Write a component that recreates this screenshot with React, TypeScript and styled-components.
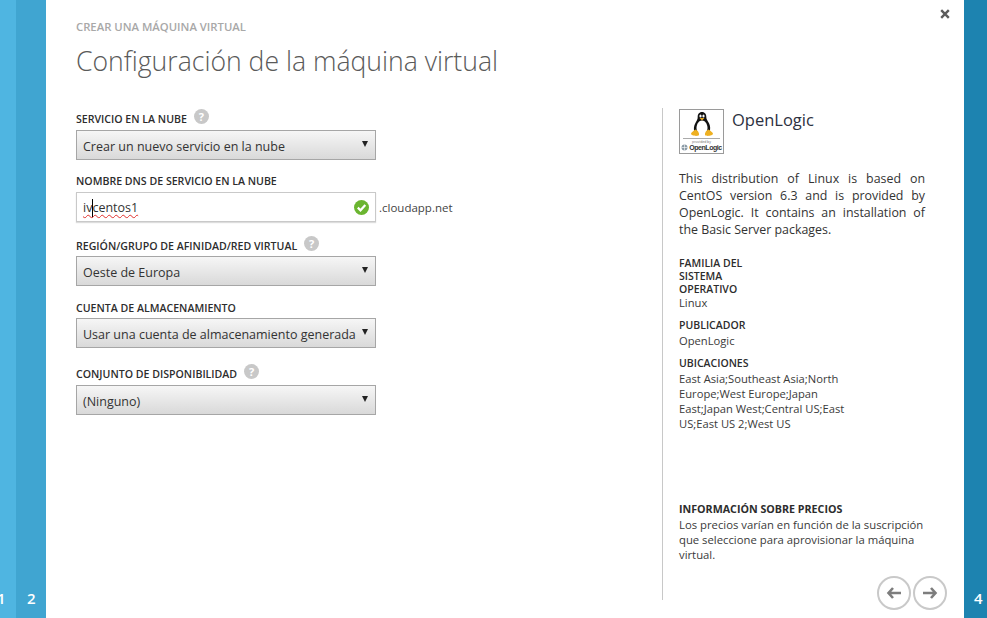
import React from "react";
import styled, { createGlobalStyle } from "styled-components";

const Global = createGlobalStyle`
  html, body { margin: 0; padding: 0; background: #fff; }
  body { font-family: "Open Sans", "Noto Sans", "Liberation Sans", sans-serif; color: #2f2f2f; }
  * { box-sizing: border-box; }
`;

const Page = styled.div`
  width: 987px;
  height: 618px;
  display: flex;
  overflow: hidden;
`;

const Rail = styled.div<{ $w: number; $bg: string; $pad: number }>`
  width: ${(p) => p.$w}px;
  flex: none;
  background: ${(p) => p.$bg};
  color: #fff;
  font-size: 15px;
  font-weight: 600;
  line-height: 20px;
  display: flex;
  align-items: flex-end;
  padding: 0 0 10px ${(p) => p.$pad}px;
  overflow: hidden;
`;

const ClippedDigit = styled.span`
  margin-left: -3px;
`;

const Main = styled.main`
  flex: 1;
  position: relative;
  display: flex;
  padding: 0 0 0 30px;
`;

const Close = styled.div`
  position: absolute;
  top: 9px;
  right: 14px;
  width: 10px;
  height: 10px;
  line-height: 0;
`;

const FormCol = styled.div`
  width: 586px;
  flex: none;
`;

const Crumb = styled.div`
  margin-top: 19px;
  height: 16px;
  line-height: 16px;
  font-size: 11.3px;
  font-weight: 600;
  color: #a8a8a8;
`;

const Title = styled.h1`
  margin: 7px 0 0;
  height: 38px;
  line-height: 38px;
  font-size: 26.6px;
  font-weight: 300;
  color: #5a5a5a;
  white-space: nowrap;
`;

const Form = styled.div`
  margin-top: 32px;
  width: 420px;
`;

const Label = styled.div<{ $top: number }>`
  margin-top: ${(p) => p.$top}px;
  height: 14px;
  line-height: 14px;
  font-size: 10.6px;
  font-weight: 600;
  color: #2d2d2d;
  display: flex;
  align-items: center;
  white-space: nowrap;
`;

const Help = styled.span`
  width: 15px;
  height: 15px;
  margin: -6px 0 0 7px;
  border-radius: 50%;
  background: #c8c8c8;
  color: #fff;
  font-size: 11px;
  font-weight: 700;
  line-height: 15px;
  text-align: center;
`;

const Select = styled.div<{ $gap?: number }>`
  width: 300px;
  height: 30px;
  margin-top: ${(p) => p.$gap ?? 4}px;
  border: 1px solid #a6a6a6;
  background: linear-gradient(#f6f6f6, #d9d9d9);
  display: flex;
  align-items: center;
  justify-content: space-between;
  padding: 3px 7px 0 6px;
  font-size: 12.5px;
  color: #333;
  white-space: nowrap;
`;

const Caret = styled.span`
  width: 0;
  height: 0;
  margin-top: -5px;
  border-left: 3px solid transparent;
  border-right: 3px solid transparent;
  border-top: 6px solid #222;
`;

const InputRow = styled.div`
  display: flex;
  align-items: center;
  margin-top: 4px;
`;

const Input = styled.div`
  width: 300px;
  height: 30px;
  border: 1px solid #c9c9c9;
  box-shadow: 0 1px 1px #ddd;
  display: flex;
  align-items: center;
  justify-content: space-between;
  padding: 0 6px;
  font-size: 12.5px;
  color: #333;
`;

const Typed = styled.span`
  position: relative;
  text-decoration: underline wavy #e0302c 1px;
  text-underline-offset: 2px;
`;

const TextCursor = styled.span`
  position: absolute;
  left: 9px;
  top: 0;
  width: 1px;
  height: 18px;
  background: #000;
`;

const Suffix = styled.span`
  margin-left: 3px;
  font-size: 11.5px;
  color: #444;
`;

const Side = styled.aside`
  width: 302px;
  height: 492px;
  margin-top: 108px;
  border-left: 1px solid #c8c8c8;
  padding: 1px 39px 0 16px;
  display: flex;
  flex-direction: column;
`;

const Head = styled.div`
  display: flex;
  gap: 8px;
`;

const Logo = styled.div`
  width: 45px;
  height: 45px;
  padding-top: 2px;
  border: 1px solid #9a9a9a;
  display: flex;
  flex-direction: column;
  align-items: center;
  flex: none;
`;

const LogoRule = styled.div`
  width: 37px;
  border-top: 1px solid #aaa;
  margin-top: 1px;
`;

const LogoSmall = styled.div`
  font-size: 3.4px;
  line-height: 5px;
  color: #666;
`;

const LogoBrand = styled.div`
  display: flex;
  align-items: center;
  gap: 1px;
  font-family: "Liberation Sans", sans-serif;
  font-size: 7px;
  line-height: 7px;
  font-weight: 700;
  color: #333;
  white-space: nowrap;
  letter-spacing: -0.45px;
`;

const Vendor = styled.div`
  font-size: 16.5px;
  line-height: 22px;
  color: #2c3140;
`;

const Desc = styled.p`
  margin: 16px 0 0;
  width: 246px;
  font-size: 12.4px;
  line-height: 17px;
  text-align: justify;
  color: #333;
`;

const Term = styled.div<{ $top: number }>`
  margin-top: ${(p) => p.$top}px;
  width: 90px;
  font-size: 10.5px;
  line-height: 13px;
  font-weight: 600;
  color: #2d2d2d;
`;

const Value = styled.div<{ $top?: number }>`
  margin-top: ${(p) => p.$top ?? 0}px;
  width: 175px;
  font-size: 11.2px;
  line-height: 15px;
  color: #3a3a3a;
`;

const Pricing = styled.div`
  margin-top: auto;
  width: 250px;
`;

const PriceTitle = styled.div`
  font-size: 10.7px;
  line-height: 15px;
  font-weight: 700;
  color: #2d2d2d;
  white-space: nowrap;
`;

const PriceText = styled.div`
  font-size: 11.3px;
  line-height: 15px;
  color: #3a3a3a;
`;

const Nav = styled.div`
  display: flex;
  justify-content: flex-end;
  gap: 2px;
  margin: 14px -22px -10px 0;
`;

const NavBtn = styled.div`
  width: 34px;
  height: 34px;
  border: 2px solid #c9c9c9;
  border-radius: 50%;
  display: flex;
  align-items: center;
  justify-content: center;
  background: #fff;
`;

const ArrowIcon = styled.svg<{ $flip?: boolean }>`
  transform: ${(p) => (p.$flip ? "scaleX(-1)" : "none")};
`;

const Arrow = ({ flip }: { flip?: boolean }) => (
  <ArrowIcon $flip={flip} width="16" height="14" viewBox="0 0 16 14">
    <path d="M7 2 2.5 7 7 12M3 7h12" fill="none" stroke="#7d7d7d" strokeWidth="2.6" />
  </ArrowIcon>
);

const Penguin = () => (
  <svg width="22" height="25" viewBox="0 0 22 25">
    <path d="M11 0c3 0 4.3 2.4 4.3 5 0 2.5 1.3 3.6 2.7 6.2 1.3 2.5 1.6 5.8.6 8.3H3.4c-1-2.5-.5-5.7.9-8.3C5.700 8.600 6.700 7.500 6.700 5 6.700 2.400 8 0 11 0z" fill="#111" />
    <path d="M11 8.500c3 0 5.500 3.500 5.500 7.500 0 3.500-2 5.500-5.500 5.500S5.500 19.500 5.500 16c0-4 2.500-7.500 5.500-7.500z" fill="#fff" />
    <ellipse cx="9.500" cy="4" rx="1.100" ry="1.500" fill="#fff" />
    <ellipse cx="12.500" cy="4" rx="1.100" ry="1.500" fill="#fff" />
    <path d="M8.500 6h5l-2.500 2.500z" fill="#e9a91f" />
    <path d="M4.500 17.500C2.500 18.800 0 20.500 0 21.800c0 1.800 6.500 3 8 1.200.5-2-1.200-4.600-3.500-5.500zM17.500 17.500c2 1.300 4.500 3 4.500 4.300 0 1.800-6.500 3-8 1.200-.5-2 1.200-4.600 3.500-5.500z" fill="#eeb021" />
  </svg>
);

const Globe = () => (
  <svg width="7" height="7" viewBox="0 0 7 7">
    <circle cx="3.500" cy="3.500" r="3" fill="#8a9aa5" />
    <path d="M.5 3.500h6M3.500.5v6" stroke="#fff" strokeWidth=".6" />
  </svg>
);

export default function App() {
  return (
    <Page>
      <Global />
      <Rail $w={16} $bg="#4fb5e1" $pad={0}><ClippedDigit>1</ClippedDigit></Rail>
      <Rail $w={30} $bg="#40a5d1" $pad={11}>2</Rail>
      <Main>
        <Close>
          <svg width="10" height="10" viewBox="0 0 10 10">
            <path d="M1.2 1.2l7.600 7.600M8.800 1.200 1.200 8.800" stroke="#5c5c5c" strokeWidth="2.4" />
          </svg>
        </Close>
        <FormCol>
          <Crumb>CREAR UNA MÁQUINA VIRTUAL</Crumb>
          <Title>Configuración de la máquina virtual</Title>
          <Form>
            <Label $top={0}>SERVICIO EN LA NUBE<Help>?</Help></Label>
            <Select>Crear un nuevo servicio en la nube<Caret /></Select>
            <Label $top={14}>NOMBRE DNS DE SERVICIO EN LA NUBE</Label>
            <InputRow>
              <Input>
                <Typed>ivcentos1<TextCursor /></Typed>
                <svg width="15" height="15" viewBox="0 0 15 15">
                  <circle cx="7.500" cy="7.500" r="7.500" fill="#6bb530" />
                  <path d="M3.800 7.600 6.500 10.300 11.300 5" fill="none" stroke="#fff" strokeWidth="2.2" />
                </svg>
              </Input>
              <Suffix>.cloudapp.net</Suffix>
            </InputRow>
            <Label $top={17}>REGIÓN/GRUPO DE AFINIDAD/RED VIRTUAL<Help>?</Help></Label>
            <Select $gap={3}>Oeste de Europa<Caret /></Select>
            <Label $top={15}>CUENTA DE ALMACENAMIENTO</Label>
            <Select $gap={3}>Usar una cuenta de almacenamiento generada<Caret /></Select>
            <Label $top={19}>CONJUNTO DE DISPONIBILIDAD<Help>?</Help></Label>
            <Select>(Ninguno)<Caret /></Select>
          </Form>
        </FormCol>
        <Side>
          <Head>
            <Logo>
              <Penguin />
              <LogoRule />
              <LogoSmall>provided by</LogoSmall>
              <LogoBrand><Globe />OpenLogic</LogoBrand>
            </Logo>
            <Vendor>OpenLogic</Vendor>
          </Head>
          <Desc>This distribution of Linux is based on CentOS version 6.3 and is provided by OpenLogic. It contains an installation of the Basic Server packages.</Desc>
          <Term $top={19}>FAMILIA DEL SISTEMA OPERATIVO</Term>
          <Value $top={-1}>Linux</Value>
          <Term $top={9}>PUBLICADOR</Term>
          <Value $top={1}>OpenLogic</Value>
          <Term $top={9}>UBICACIONES</Term>
          <Value $top={1}>East Asia;Southeast Asia;North Europe;West Europe;Japan East;Japan West;Central US;East US;East US 2;West US</Value>
          <Pricing>
            <PriceTitle>INFORMACIÓN SOBRE PRECIOS</PriceTitle>
            <PriceText>Los precios varían en función de la suscripción que seleccione para aprovisionar la máquina virtual.</PriceText>
          </Pricing>
          <Nav>
            <NavBtn><Arrow /></NavBtn>
            <NavBtn><Arrow flip /></NavBtn>
          </Nav>
        </Side>
      </Main>
      <Rail $w={23} $bg="#1d83b0" $pad={10}>4</Rail>
    </Page>
  );
}
